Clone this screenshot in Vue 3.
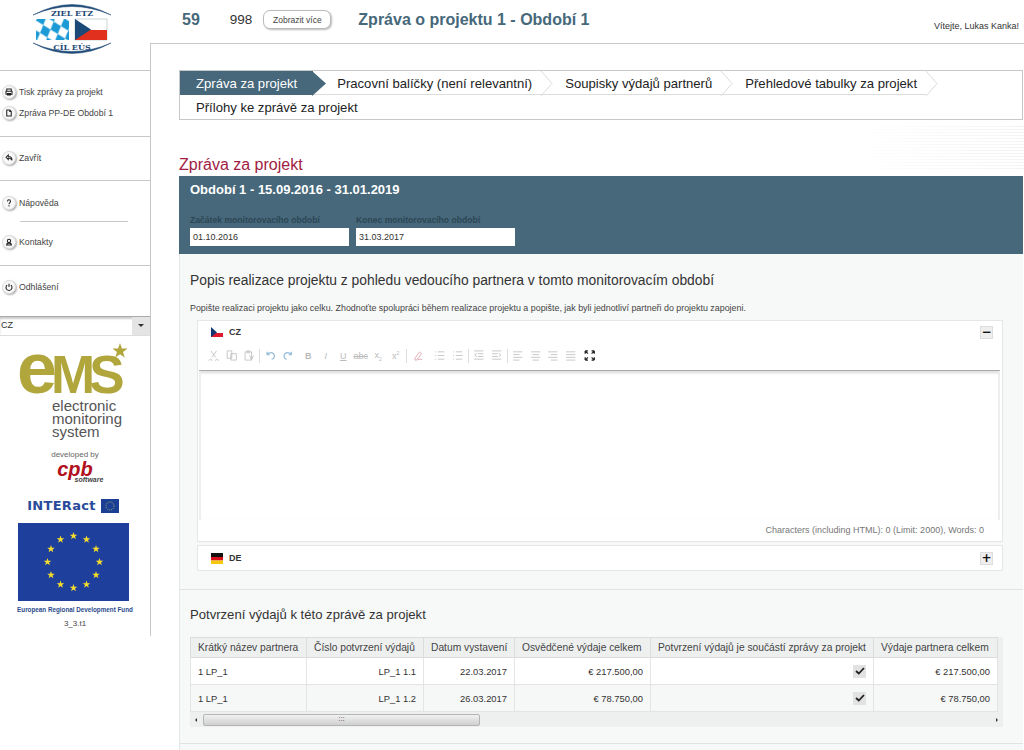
<template>
  <div class="page">
    <aside class="sidebar">
      <div class="logo-box">
        <svg class="etz-logo" width="84" height="56" viewBox="0 0 84 56">
          <path d="M3 13 Q42 -8 81 13 Q42 -4 3 13 Z" fill="#1f4a78" stroke="#1f4a78" stroke-width="0.5" />
          <path d="M3 41 Q42 62 81 41 Q42 58 3 41 Z" fill="#1f4a78" stroke="#1f4a78" stroke-width="0.5" />
          <text x="42" y="14" class="logo-text" text-anchor="middle">ZIEL ETZ</text>
          <text x="42" y="48" class="logo-text" text-anchor="middle">CÍL EÚS</text>
          <defs>
            <pattern id="lozenge" width="11" height="13" patternUnits="userSpaceOnUse" patternTransform="rotate(-18)">
              <rect width="11" height="13" fill="#fff" />
              <path d="M5.500 0 L11 6.500 L5.500 13 L0 6.500 Z" fill="#1c9ad6" />
            </pattern>
          </defs>
          <rect x="6" y="17" width="33" height="21" fill="url(#lozenge)" />
          <rect x="45" y="17" width="32" height="21" fill="#fff" stroke="#9aa" stroke-width="0.5" />
          <rect x="45" y="28" width="32" height="10" fill="#e1301e" />
          <path d="M45 17 L61 27.500 L45 38 Z" fill="#1c4a78" />
        </svg>
      </div>

      <nav class="side-group first">
        <a class="side-link"><svg class="round-ico" viewBox="0 0 16 16"><path d="M5 7V4h6v3M4 7h8v4H4zM6 10h4v2H6z" /></svg>Tisk zprávy za projekt</a>
        <a class="side-link"><svg class="round-ico" viewBox="0 0 16 16"><path d="M5 4h4l2 2v6H5z M9 4v2h2" /></svg>Zpráva PP-DE Období 1</a>
      </nav>
      <nav class="side-group">
        <a class="side-link"><svg class="round-ico" viewBox="0 0 16 16"><path d="M4 7l3-3v2c3 0 5 1 5 5-1-2-2-3-5-3v2z" /></svg>Zavřít</a>
      </nav>
      <nav class="side-group help">
        <a class="side-link"><svg class="round-ico" viewBox="0 0 16 16"><path d="M6 6c0-3 4-3 4 0 0 1.500-2 1.500-2 3.500M8 11v1.500" /></svg>Nápověda</a>
        <hr class="side-rule">
        <a class="side-link"><svg class="round-ico" viewBox="0 0 16 16"><circle cx="8" cy="6.500" r="2.200" /><path d="M4 12h8M5 12c0-2 1-2.500 3-2.500s3 .5 3 2.500" /></svg>Kontakty</a>
      </nav>
      <nav class="side-group last">
        <a class="side-link"><svg class="round-ico" viewBox="0 0 16 16"><path d="M8 3.500v4.500M5.500 5.500a4 4 0 1 0 5 0" /></svg>Odhlášení</a>
      </nav>

      <div class="lang-select">
        <span class="lang-value">CZ</span>
        <span class="lang-arrow"></span>
      </div>

      <div class="side-brand">
        <svg class="ems-logo" width="116" height="102" viewBox="0 0 116 102">
          <text x="-1" y="50" class="ems-mark"><tspan class="ems-e">e</tspan><tspan>MS</tspan></text>
          <polygon :points="starPoints(102, 8, 8)" fill="#b0a63c" />
          <text x="34" y="68" class="ems-word">electronic</text>
          <text x="34" y="81" class="ems-word">monitoring</text>
          <text x="34" y="94" class="ems-word">system</text>
        </svg>
        <div class="dev-by">developed by</div>
        <div class="cpb">cpb</div>
        <div class="cpb-sub">software</div>
        <div class="interact">
          <span class="interact-name">INTERact</span>
          <svg width="18" height="14" viewBox="0 0 18 14">
            <rect width="18" height="14" fill="#1b3f94" />
            <circle cx="9" cy="7" r="4" fill="none" stroke="#b9c06a" stroke-width="0.8" stroke-dasharray="1 1" />
          </svg>
        </div>
        <svg class="eu-flag" width="111" height="78" viewBox="0 0 111 78">
          <rect width="111" height="78" fill="#1f3f9c" />
          <polygon v-for="(s, i) in euStars" :key="i" :points="starPoints(s.x, s.y, 4)" fill="#f5dc2c" />
        </svg>
        <div class="erdf">European Regional Development Fund</div>
        <div class="version">3_3.t1</div>
      </div>
    </aside>

    <div class="right-col">
      <header class="top-bar">
        <span class="project-id">59</span>
        <span class="project-no">998</span>
        <button class="more-btn" type="button">Zobrazit více</button>
        <span class="report-title">Zpráva o projektu 1 - Období 1</span>
        <span class="welcome">Vítejte, Lukas Kanka!</span>
      </header>

      <main class="content">
        <div class="tabs">
          <div class="tab-row">
            <div v-for="(t, i) in tabs" :key="t" class="tab top" :class="{ active: i === 0 }">
              {{ t }}
              <svg class="tab-arrow" width="16" height="25" viewBox="0 0 16 25">
                <path v-if="i === 0" d="M0 0 L14 12.500 L0 25 Z" fill="#46687a" />
                <path v-else d="M1 0 L12 12.500 L1 25" fill="none" stroke="#dcdcdc" />
              </svg>
            </div>
          </div>
          <div class="tab-row"><div class="tab first-col">Přílohy ke zprávě za projekt</div></div>
        </div>

        <h2 class="section-title">Zpráva za projekt</h2>

        <section class="period">
          <h3 class="period-title">Období 1 - 15.09.2016 - 31.01.2019</h3>
          <div class="period-fields">
            <label class="field">
              <span class="field-label">Začátek monitorovacího období</span>
              <span class="field-input">01.10.2016</span>
            </label>
            <label class="field">
              <span class="field-label">Konec monitorovacího období</span>
              <span class="field-input">31.03.2017</span>
            </label>
          </div>
        </section>

        <section class="block block-desc">
          <h3 class="block-title">Popis realizace projektu z pohledu vedoucího partnera v tomto monitorovacím období</h3>
          <p class="help-text">Popište realizaci projektu jako celku. Zhodnoťte spolupráci během realizace projektu a popište, jak byli jednotliví partneři do projektu zapojeni.</p>

          <div class="editor">
            <div class="editor-head">
              <svg class="flag" width="12" height="11" viewBox="0 0 12 11">
                <rect y="1" width="12" height="5" fill="#fff" />
                <rect y="6" width="12" height="4" fill="#e0182d" />
                <path d="M0 0 L6 5.500 L0 10 Z" fill="#14366f" />
              </svg>
              <span class="lang-code">CZ</span>
              <span class="toggle">&minus;</span>
            </div>
            <div class="toolbar">
              <template v-for="(b, i) in toolbar" :key="i">
                <span v-if="b.sep" class="tb-sep"></span>
                <span v-else-if="b.t" class="tb-text" :class="b.cls">{{ b.t }}<sub v-if="b.sub">{{ b.sub }}</sub><sup v-if="b.sup">{{ b.sup }}</sup></span>
                <svg v-else class="tb-icon" :class="b.cls" viewBox="0 0 12 12"><path :d="b.d" /></svg>
              </template>
            </div>
            <div class="editor-area"></div>
            <div class="editor-count">Characters (including HTML): 0 (Limit: 2000), Words: 0</div>
          </div>

          <div class="editor editor-closed">
            <div class="editor-head">
              <svg class="flag" width="12" height="11" viewBox="0 0 12 11">
                <rect y="0" width="12" height="4" fill="#111" />
                <rect y="4" width="12" height="3.500" fill="#d8101c" />
                <rect y="7.500" width="12" height="3.500" fill="#f5c810" />
              </svg>
              <span class="lang-code">DE</span>
              <span class="toggle">+</span>
            </div>
          </div>
        </section>

        <section class="block block-table">
          <h3 class="block-title small">Potvrzení výdajů k této zprávě za projekt</h3>
          <div class="table-wrap">
            <table class="expenses">
              <colgroup>
                <col v-for="w in colWidths" :key="w.k" :style="{ width: w.v + 'px' }">
              </colgroup>
              <thead>
                <tr>
                  <th v-for="h in headers" :key="h">{{ h }}</th>
                </tr>
              </thead>
              <tbody>
                <tr v-for="r in rows" :key="r.no">
                  <td>{{ r.partner }}</td>
                  <td class="num">{{ r.no }}</td>
                  <td class="num">{{ r.date }}</td>
                  <td class="num">{{ r.certified }}</td>
                  <td class="num"><span class="check">
                    <svg width="10" height="8" viewBox="0 0 10 8"><path d="M1 4 L3.800 6.500 L9 1" fill="none" stroke="#222" stroke-width="1.800" /></svg>
                  </span></td>
                  <td class="num">{{ r.total }}</td>
                </tr>
              </tbody>
            </table>
            <div class="hscroll">
              <span class="hscroll-left"></span>
              <div class="hscroll-track">
                <span class="hscroll-thumb">:::</span>
              </div>
              <span class="hscroll-right"></span>
            </div>
          </div>
        </section>
      </main>
    </div>
  </div>
</template>

<script setup>
const tabs = ['Zpráva za projekt', 'Pracovní balíčky (není relevantní)', 'Soupisky výdajů partnerů', 'Přehledové tabulky za projekt']

const headers = [
  'Krátký název partnera',
  'Číslo potvrzení výdajů',
  'Datum vystavení',
  'Osvědčené výdaje celkem',
  'Potvrzení výdajů je součástí zprávy za projekt',
  'Výdaje partnera celkem',
]
const colWidths = [116, 117, 91, 136, 223, 124].map((v, k) => ({ k, v }))

const rows = [
  { partner: '1 LP_1', no: 'LP_1 1.1', date: '22.03.2017', certified: '€ 217.500,00', total: '€ 217.500,00' },
  { partner: '1 LP_1', no: 'LP_1 1.2', date: '26.03.2017', certified: '€ 78.750,00', total: '€ 78.750,00' },
]

const toolbar = [
  { d: 'M3 1l5 7M9 1L4 8M2.500 10a1.500 1.500 0 1 0 .1 0M9.500 10a1.500 1.500 0 1 0 .1 0', cls: 'gray' },
  { d: 'M1 1h5v8H1zM5 4h6v7H5z', cls: 'gray' },
  { d: 'M2 2h7v9H2zM4 1h3v2H4zM7 6l2 5M11 6l-2 5', cls: 'gray' },
  { sep: true },
  { d: 'M2 2v3h3M2.500 5C4 2 9 2 10 6c.3 2-1 4-3 4', cls: 'blue' },
  { d: 'M10 2v3H7M9.500 5C8 2 3 2 2 6c-.3 2 1 4 3 4', cls: 'blue' },
  { t: 'B', cls: 'bold' },
  { t: 'I', cls: 'italic' },
  { t: 'U', cls: 'under' },
  { t: 'abc', cls: 'strike' },
  { t: 'x', sub: '2' },
  { t: 'x', sup: '2' },
  { sep: true },
  { d: 'M3 9l5-7 2 2-5 7H3zM6 11c2-2 3 0 5-1', cls: 'pink' },
  { d: 'M1 2h1M1 6h1M1 10h1M4 2h7M4 6h7M4 10h7', cls: 'gray wide' },
  { d: 'M1 2h1M1 6h1M1 10h1M4 2h7M4 6h7M4 10h7', cls: 'gray' },
  { sep: true },
  { d: 'M1 1h10M5 4h6M5 7h6M1 10h10M4 3.500L1.500 5.500 4 7.500', cls: 'gray' },
  { d: 'M1 1h10M1 4h6M1 7h6M1 10h10M8 3.500l2.500 2-2.500 2', cls: 'gray' },
  { sep: true },
  { d: 'M1 2h10M1 5h7M1 8h10M1 11h7', cls: 'gray' },
  { d: 'M1 2h10M2.500 5h7M1 8h10M2.500 11h7', cls: 'gray' },
  { d: 'M1 2h10M4 5h7M1 8h10M4 11h7', cls: 'gray' },
  { d: 'M1 2h10M1 5h10M1 8h10M1 11h10', cls: 'gray' },
  { d: 'M1 1l3 3M1 1h3M1 1v3M11 1L8 4M11 1H8M11 1v3M1 11l3-3M1 11h3M1 11V8M11 11L8 8M11 11H8M11 11V8', cls: 'dark' },
]

// twelve stars on the EU flag ring
const euStars = Array.from({ length: 12 }, (_, i) => {
  const a = (i * Math.PI) / 6
  return { x: 55.5 + 26 * Math.sin(a), y: 39 - 26 * Math.cos(a) }
})

const starPoints = (cx, cy, r) => {
  const pts = []
  for (let i = 0; i < 10; i++) {
    const rad = i % 2 === 0 ? r : r * 0.4
    const a = (i * Math.PI) / 5
    pts.push(`${(cx + rad * Math.sin(a)).toFixed(2)},${(cy - rad * Math.cos(a)).toFixed(2)}`)
  }
  return pts.join(' ')
}
</script>

<style>
html, body {
  margin: 0;
  background: #fff;
}
</style>

<style scoped>
.page {
  display: flex;
  width: 1024px;
  height: 750px;
  overflow: hidden;
  font-family: "Liberation Sans", Arial, sans-serif;
  color: #333;
  background: #fff;
}

/* sidebar */
.sidebar {
  width: 151px;
  flex: none;
  height: 636px;
  box-sizing: border-box;
  border-right: 1px solid #c8c8c8;
}
.logo-box {
  height: 70px;
  margin-right: -1px;
  background: #fff linear-gradient(#c8c8c8, #c8c8c8) right 43px / 1px 100% no-repeat;
}
.etz-logo {
  display: block;
  margin-left: 30px;
  padding-top: 2px;
}
.logo-text {
  font: bold 8px "DejaVu Serif", "Liberation Serif", serif;
  fill: #1f4a78;
}
.side-group {
  border-top: 1px solid #c8c8c8;
  box-sizing: border-box;
  height: 44px;
  padding-top: 13px;
}
.side-group.first {
  height: 66px;
  padding-top: 13px;
}
.side-group.help {
  height: 85px;
  padding-top: 14px;
}
.side-group.last {
  height: 51px;
  padding-top: 13px;
}
.side-link {
  display: flex;
  align-items: center;
  height: 15px;
  padding-left: 2px;
  gap: 3px;
  font-size: 8.700px;
  color: #444;
}
.side-group.first .side-link + .side-link {
  margin-top: 6px;
}
.round-ico {
  width: 14px;
  height: 14px;
  flex: none;
  border-radius: 50%;
  background: #f8f8f8;
  border: 1px solid #ddd;
  box-sizing: border-box;
  box-shadow: 1px 1px 2px #aaa;
  fill: none;
  stroke: #222;
  stroke-width: 1.400;
}
.side-rule {
  border: 0;
  border-top: 1px solid #c8c8c8;
  margin: 11px 22px 12px 20px;
}
.lang-select {
  display: flex;
  height: 18px;
  border-top: 1px solid #aaa;
  border-bottom: 1px solid #ddd;
  box-shadow: inset 0 2px 2px #ccc;
}
.lang-value {
  flex: 1;
  font-size: 9px;
  line-height: 17px;
  padding-left: 1px;
  color: #333;
}
.lang-arrow {
  width: 18px;
  background: #e4e4e4;
  position: relative;
}
.lang-arrow::after {
  content: "";
  position: absolute;
  left: 6px;
  top: 7px;
  border: 3px solid transparent;
  border-top: 3px solid #333;
}
.side-brand {
  display: flex;
  flex-direction: column;
  align-items: center;
}
.ems-logo {
  margin-top: 7px;
  margin-left: 2px;
  display: block;
  overflow: visible;
}
.ems-mark {
  font: bold 53px "Liberation Sans", Arial, sans-serif;
  letter-spacing: -6px;
  fill: #b0a63c;
}
.ems-e {
  font-size: 72px;
}
.ems-word {
  font: 15px "Liberation Sans", Arial, sans-serif;
  fill: #555;
}
.dev-by {
  margin-top: 5px;
  font-size: 8px;
  color: #666;
}
.cpb {
  font: italic bold 20px/13px "Liberation Sans", Arial, sans-serif;
  color: #b01020;
  margin-top: 4px;
}
.cpb-sub {
  font: italic bold 7px/7px "Liberation Sans", Arial, sans-serif;
  color: #444;
  margin-left: 28px;
}
.interact {
  display: flex;
  align-items: center;
  gap: 5px;
  margin-top: 15px;
  margin-right: 4px;
}
.interact-name {
  font: bold 13px "DejaVu Sans", sans-serif;
  color: #2a4a9a;
  letter-spacing: 0.3px;
}
.eu-flag {
  display: block;
  margin-top: 10px;
  margin-right: 3px;
}
.erdf {
  font-size: 6.300px;
  font-weight: bold;
  color: #2a4a8a;
  margin-top: 5px;
  white-space: nowrap;
}
.version {
  font-size: 8px;
  color: #444;
  margin-top: 6px;
}

/* top bar */
.right-col {
  flex: 1;
  min-width: 0;
}
.top-bar {
  display: flex;
  align-items: center;
  height: 39px;
  margin-left: -1px;
  border-bottom: 1px solid #c8c8c8;
  padding-bottom: 4px;
}
.project-id {
  margin-left: 32px;
  font-size: 16px;
  font-weight: bold;
  color: #46687a;
}
.project-no {
  margin-left: 30px;
  font-size: 13.500px;
  color: #333;
}
.more-btn {
  margin-left: 11px;
  width: 68px;
  height: 19px;
  padding: 0;
  background: #fff;
  border: 1px solid #bbb;
  border-radius: 7px;
  box-shadow: 1px 1px 2px #bbb;
  font: 8.500px "Liberation Sans", Arial, sans-serif;
  color: #444;
}
.report-title {
  margin-left: 27px;
  font-size: 16px;
  font-weight: bold;
  color: #46687a;
}
.welcome {
  margin-left: auto;
  margin-right: 5px;
  margin-top: 12px;
  font-size: 9px;
  color: #333;
}

/* main */
.content {
  padding: 26px 1px 0 28px;
  background:
    linear-gradient(90deg, #fff, rgba(255,255,255,0)) right 80px / 170px 46px no-repeat,
    repeating-linear-gradient(180deg, rgba(255,255,255,0) 0 2px, rgba(232,232,232,0.5) 2px 3px) right 80px / 170px 46px no-repeat;
}
.tabs {
  border: 1px solid #c8c8c8;
  background: #fff;
}
.tab-row {
  display: flex;
  height: 24px;
}
.tab {
  position: relative;
  height: 24px;
  box-sizing: border-box;
  padding: 0 9px 0 24px;
  font-size: 13.100px;
  line-height: 26px;
  color: #222;
  white-space: nowrap;
}
.tab.top {
  border-bottom: 1px solid #dcdcdc;
}
.tab.active {
  color: #fff;
  background: #46687a;
  padding: 0 16px 0 16px;
  border-bottom-color: #46687a;
}
.tab.first-col {
  padding-left: 16px;
}
.tab-arrow {
  position: absolute;
  left: 100%;
  top: 0;
  margin-left: -1px;
  z-index: 1;
}
.section-title {
  margin: 34px 0 0;
  height: 22px;
  font-size: 16px;
  font-weight: normal;
  line-height: 22px;
  color: #a01c42;
}
.period {
  background: #46687a;
  height: 78px;
  padding: 6px 11px 0;
  box-sizing: border-box;
}
.period-title {
  margin: 0;
  font-size: 13px;
  line-height: 15px;
  color: #fff;
}
.period-fields {
  display: flex;
  gap: 7px;
  margin-top: 16px;
}
.field {
  display: block;
  width: 159px;
}
.field-label {
  display: block;
  font-size: 8.600px;
  font-weight: bold;
  line-height: 14px;
  color: #2c4655;
  white-space: nowrap;
}
.field-input {
  display: block;
  margin-top: 1px;
  height: 18px;
  background: #fff;
  font-size: 9px;
  line-height: 18px;
  padding-left: 3px;
  color: #333;
}

.block {
  background: #f7f8f8;
  padding: 0 20px 0 10px;
  border-left: 1px solid #e6e6e6;
  border-bottom: 1px solid #e2e2e2;
  box-sizing: border-box;
}
.block-desc {
  padding-top: 18px;
  height: 336px;
}
.block-table {
  padding-top: 16px;
  height: 238px;
  border-bottom: 0;
  background: linear-gradient(#e2e2e2, #e2e2e2) 0 153px / 100% 1px no-repeat #f7f8f8;
}
.block-title {
  margin: 0;
  font-size: 13.850px;
  font-weight: normal;
  line-height: 17px;
  color: #333;
}
.block-title.small {
  font-size: 13.100px;
}
.help-text {
  margin: 13px 0 6px;
  font-size: 8.900px;
  line-height: 12px;
  color: #444;
  white-space: nowrap;
}
.editor {
  margin-left: 7px;
  background: #fff;
  border: 1px solid #e6e6e6;
  width: 806px;
  height: 222px;
  box-sizing: border-box;
}
.editor-closed {
  margin-top: 3px;
  height: 26px;
}
.editor-head {
  display: flex;
  align-items: center;
  height: 22px;
  padding: 0 9px 0 13px;
  gap: 6px;
}
.editor-closed .editor-head {
  height: 24px;
}
.lang-code {
  font-size: 9px;
  color: #333;
  font-weight: bold;
}
.toggle {
  margin-left: auto;
  width: 13px;
  height: 13px;
  background: #eee;
  border: 1px solid #ddd;
  box-sizing: border-box;
  text-align: center;
  font: bold 12px/10px "DejaVu Sans", sans-serif;
  color: #111;
}
.toolbar {
  display: flex;
  align-items: center;
  height: 25px;
  padding-left: 7px;
}
.tb-icon {
  width: 11px;
  height: 11px;
  padding: 0 3.250px;
  flex: none;
  fill: none;
  stroke-width: 1;
}
.tb-icon.gray { stroke: #c4c4c4; }
.tb-icon.blue { stroke: #9cc0da; stroke-width: 1.400; }
.tb-icon.pink { stroke: #e0a8b2; }
.tb-icon.dark { stroke: #222; margin-left: 2px; stroke-width: 1.300; }
.tb-icon.wide { margin-left: 5px; }
.tb-sep {
  width: 1px;
  height: 14px;
  background: #ddd;
  margin: 0 1.500px;
}
.tb-text {
  width: 17.500px;
  flex: none;
  text-align: center;
  font-size: 9px;
  color: #bbb;
}
.tb-text.bold {
  font-weight: bold;
  margin-left: 3px;
}
.tb-text.italic { font-style: italic; }
.tb-text.under { text-decoration: underline; }
.tb-text.strike { text-decoration: line-through; }
.tb-text sub, .tb-text sup {
  font-size: 5px;
}
.editor-area {
  height: 149px;
  margin: 2px 2px 0 1px;
  border-top: 1px solid #aaa;
  background: linear-gradient(#d8d8d8, #fff 4px);
  box-shadow: inset -2px 0 1px #eee, inset 2px 0 1px #eee;
}
.editor-count {
  margin-top: 5px;
  padding-right: 18px;
  text-align: right;
  font-size: 9px;
  color: #777;
}

/* table */
.table-wrap {
  margin-top: 14px;
  width: 813px;
  background: #eef0f0;
}
.expenses {
  border-collapse: collapse;
  table-layout: fixed;
  width: 807px;
  background: #fff;
}
.expenses th {
  height: 19px;
  padding: 0 7px;
  font-weight: normal;
  font-size: 10.250px;
  color: #444;
  text-align: left;
  white-space: nowrap;
  overflow: hidden;
  background: #eef0f0;
  border: 1px solid #dcdcdc;
}
.expenses td {
  height: 27px;
  padding: 0 7px;
  box-sizing: border-box;
  font-size: 9.400px;
  color: #333;
  border: 1px solid #e4e4e4;
  white-space: nowrap;
}
.expenses tbody tr:nth-child(even) td {
  background: #f6f7f7;
}
.num {
  text-align: right;
}
.check {
  display: inline-flex;
  align-items: center;
  justify-content: center;
  width: 13px;
  height: 13px;
  background: #e2e2e2;
  vertical-align: middle;
}
.hscroll {
  display: flex;
  align-items: center;
  height: 14px;
  margin-top: 1px;
  background: #eef0f0;
}
.hscroll-left, .hscroll-right {
  width: 13px;
  height: 14px;
  position: relative;
  flex: none;
}
.hscroll-left::after, .hscroll-right::after {
  content: "";
  position: absolute;
  top: 5px;
  border: 2px solid transparent;
}
.hscroll-left::after {
  left: 3px;
  border-right-color: #333;
}
.hscroll-right::after {
  right: 3px;
  border-left-color: #333;
}
.hscroll-track {
  flex: 1;
  height: 14px;
}
.hscroll-thumb {
  display: block;
  width: 277px;
  height: 12px;
  margin-top: 1px;
  border: 1px solid #b5b5b5;
  box-sizing: border-box;
  border-radius: 2px;
  background: linear-gradient(#f2f2f2, #cfcfcf);
  text-align: center;
  font-size: 8px;
  line-height: 8px;
  color: #444;
}
</style>
